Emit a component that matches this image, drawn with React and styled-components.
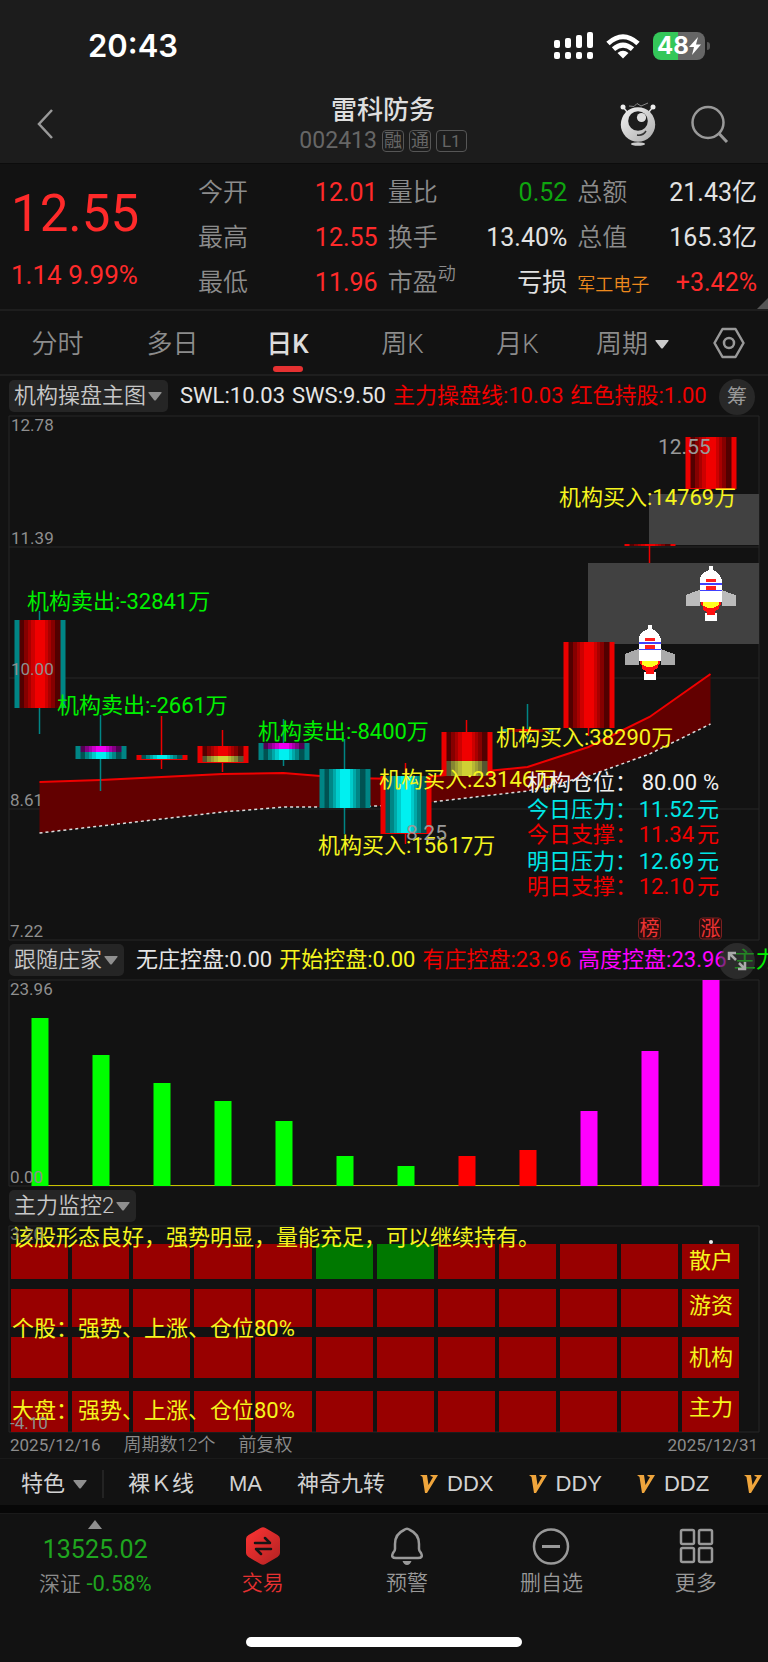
import { useState } from "react";
import styled, { createGlobalStyle } from "styled-components";

const GlobalStyle = createGlobalStyle`
  * {
    box-sizing: border-box;
  }
  body {
    margin: 0;
    background: #121212;
    font-family: Roboto, "Noto Sans CJK SC", sans-serif;
    font-weight: 350;
    line-height: 1.2;
    overflow-x: hidden;
  }
  button {
    border: 0;
    margin: 0;
    padding: 0;
    background: none;
    color: inherit;
    font: inherit;
    cursor: pointer;
  }
  svg {
    display: block;
  }
`;

const Page = styled.div`
  display: flex;
  flex-direction: column;
  color: #999;
`;

/* ---------- top ---------- */

const TopArea = styled.header`
  background: #1c1c1c;
  border-bottom: 1px solid #0c0c0c;
`;

const StatusBar = styled.div`
  display: flex;
  align-items: center;
  justify-content: space-between;
  height: 80px;
  padding: 12px 58px 0 88px;
`;

const Clock = styled.time`
  font-family: Inter, sans-serif;
  font-size: 31px;
  font-weight: 600;
  line-height: 40px;
  color: #fff;
`;

const StatusIcons = styled.div`
  display: flex;
  align-items: center;
  gap: 13px;
`;

const Battery = styled.div`
  display: flex;
  align-items: center;
  gap: 2px;
`;

const BatteryBody = styled.div`
  display: flex;
  align-items: center;
  justify-content: center;
  width: 52px;
  height: 28px;
  border-radius: 8px;
  background: linear-gradient(90deg, #34c759 48%, #666 48%);
  font-family: Inter, sans-serif;
  font-size: 24px;
  font-weight: 700;
  color: #fff;
`;

const BatteryTip = styled.div`
  width: 3px;
  height: 8px;
  border-radius: 0 4px 4px 0;
  background: #555;
`;

const NavBar = styled.div`
  display: grid;
  grid-template-columns: 1fr auto 1fr;
  align-items: center;
  height: 83px;
  padding: 4px 39px 0 37px;
`;

const TitleBlock = styled.div`
  display: flex;
  flex-direction: column;
  align-items: center;
`;

const StockName = styled.h1`
  margin: 0;
  font-size: 26px;
  font-weight: 500;
  line-height: 34px;
  color: #dedede;
`;

const StockCode = styled.div`
  display: flex;
  align-items: center;
  gap: 5px;
  font-size: 23px;
  font-weight: 400;
  line-height: 28px;
  color: #666;
`;

const Badge = styled.span`
  height: 22px;
  padding: 0 ${(props) => (props.$wide ? 5 : 1)}px;
  border: 1px solid #565656;
  border-radius: 4px;
  font-size: ${(props) => (props.$wide ? 17 : 18)}px;
  line-height: 20px;
`;

const NavActions = styled.div`
  display: flex;
  align-items: center;
  justify-content: flex-end;
  gap: 35px;
`;

/* ---------- quote ---------- */

const QuotePanel = styled.section`
  position: relative;
  display: flex;
  padding: 6px 11px 4px;
  border-bottom: 2px solid #1e1e1e;
`;

const PriceBlock = styled.div`
  width: 187px;
  padding-top: 12px;
  color: #ff2a2a;
`;

const Price = styled.div`
  font-size: 51px;
  font-weight: 400;
  line-height: 64px;
`;

const Change = styled.div`
  font-size: 26px;
  font-weight: 400;
  line-height: 58px;
`;

const StatGrid = styled.dl`
  flex: 1;
  display: grid;
  grid-template-columns: repeat(3, 1fr);
  column-gap: 10px;
  margin: 0;
`;

const Stat = styled.div`
  display: flex;
  align-items: baseline;
  justify-content: space-between;
  height: 45px;
  line-height: 45px;
  white-space: nowrap;
`;

const StatLabel = styled.dt`
  display: flex;
  font-size: ${(props) => (props.$sector ? 18 : 25)}px;
  color: ${(props) => (props.$sector ? "#ee8a1d" : "#8c8c8c")};

  sup {
    font-size: 18px;
    line-height: 28px;
  }
`;

const StatValue = styled.dd`
  margin: 0;
  font-size: 25px;
  font-weight: 400;
  color: ${(props) => props.$color || "#e2e2e2"};
`;

const Corner = styled.div`
  position: absolute;
  right: 0;
  bottom: 0;
  border-left: 11px solid transparent;
  border-bottom: 11px solid #555;
`;

/* ---------- period tabs ---------- */

const Tabs = styled.nav`
  display: flex;
  height: 65px;
  border-bottom: 2px solid #1e1e1e;
`;

const Tab = styled.button`
  position: relative;
  flex: 115;
  display: flex;
  align-items: center;
  justify-content: center;
  gap: 7px;
  padding-top: 4px;
  font-size: 26px;
  font-weight: ${(props) => (props.$active ? 500 : 350)};
  color: ${(props) => (props.$active ? "#dcdcdc" : "#8c8c8c")};

  &::after {
    content: "";
    display: ${(props) => (props.$active ? "block" : "none")};
    position: absolute;
    bottom: 2px;
    width: 30px;
    height: 6px;
    border-radius: 3px;
    background: #e53131;
  }
`;

const SettingsButton = styled.button`
  flex: 78;
  display: flex;
  align-items: center;
  justify-content: center;
`;

/* ---------- indicators ---------- */

const IndicatorBar = styled.div`
  position: relative;
  display: flex;
  align-items: center;
  gap: 12px;
  height: 40px;
  padding-left: 9px;
  overflow: hidden;
  font-size: 22px;
  font-weight: 400;
  white-space: nowrap;
`;

const Chip = styled.button`
  flex: none;
  display: flex;
  align-items: center;
  gap: 2px;
  height: 32px;
  padding: 0 6px 0 5px;
  border-radius: 5px;
  background: #252525;
  color: #c8c8c8;
  font-size: 22px;
  font-weight: 350;
`;

const Readings = styled.div`
  display: flex;
  gap: 7px;
`;

const Reading = styled.span`
  color: ${(props) => props.$color};
`;

const RoundButton = styled.button`
  position: absolute;
  right: 13px;
  top: 3px;
  display: flex;
  align-items: center;
  justify-content: center;
  width: 36px;
  height: 36px;
  border-radius: 50%;
  background: ${(props) => (props.$faint ? "rgba(60, 60, 60, 0.6)" : "#282828")};
  color: #999;
  font-size: 20px;
`;

const ChartBox = styled.div`
  padding: 0 9px;
`;

const Chart = styled.svg`
  width: 100%;
  overflow: visible;
  font-size: 22px;
  font-weight: 400;

  .axis {
    font-size: 17px;
    fill: #8f8f8f;
  }
`;

const DateRow = styled.div`
  display: flex;
  align-items: center;
  gap: 23px;
  height: 27px;
  padding: 0 10px;
  border-bottom: 1px solid #1a1a1a;
  font-size: 18px;
  color: #8c8c8c;

  time {
    font-size: 17px;
    font-weight: 400;
  }
  time:last-child {
    margin-left: auto;
  }
`;

/* ---------- bottom ---------- */

const FeatureBar = styled.div`
  display: flex;
  align-items: center;
  height: 46px;
  padding: 4px 0 0 21px;
  overflow: hidden;
  font-family: "Liberation Sans", "Noto Sans CJK SC", sans-serif;
  font-size: 22px;
  font-weight: 400;
  white-space: nowrap;
  color: #d2d2d2;
`;

const FeatureMenu = styled.button`
  display: flex;
  align-items: center;
  gap: 8px;
  height: 28px;
  padding-right: 15px;
  margin-right: 24px;
  border-right: 2px solid #232323;
`;

const FeatureList = styled.div`
  display: flex;
  gap: 35px;
`;

const Feature = styled.button`
  display: flex;
  align-items: center;
  gap: 9px;
`;

const Divider = styled.div`
  height: 9px;
  background: #070707;
  border-bottom: 1px solid #1a1a1a;
`;

const BottomNav = styled.nav`
  display: flex;
  height: 92px;
`;

const IndexLink = styled.a`
  flex: 190;
  display: flex;
  flex-direction: column;
  align-items: center;
  padding-top: 6px;
  color: #1fa51f;
  font-size: 22px;
  font-weight: 400;
  line-height: 26px;
  text-decoration: none;

  strong {
    font-size: 25px;
    font-weight: 400;
    line-height: 42px;
  }
  em {
    font-style: normal;
    font-weight: 350;
    font-size: 21px;
    color: #8c8c8c;
  }
`;

const NavItem = styled.a`
  flex: 144;
  display: flex;
  flex-direction: column;
  align-items: center;
  gap: 3px;
  padding-top: 13px;
  font-size: 21px;
  line-height: 30px;
  text-decoration: none;
  color: ${(props) => (props.$active ? "#e53131" : "#999")};
`;

const HomeArea = styled.div`
  display: flex;
  justify-content: center;
  height: 55px;
  padding-top: 31px;
`;

const HomeBar = styled.div`
  width: 36%;
  height: 10px;
  border-radius: 5px;
  background: #fff;
`;

const RED = "#f00000";
const YELLOW = "#f5f51e";
const GREEN = "#00f000";
const CYAN = "#00e6e6";
const MAGENTA = "#ff00ff";
const UP = "#ff2a2a";

const stats = [
  { label: "今开", value: "12.01", color: UP },
  { label: "量比", value: "0.52", color: "#0fa50f" },
  { label: "总额", value: "21.43亿" },
  { label: "最高", value: "12.55", color: UP },
  { label: "换手", value: "13.40%" },
  { label: "总值", value: "165.3亿" },
  { label: "最低", value: "11.96", color: UP },
  { label: "市盈", sup: "动", value: "亏损" },
  { label: "军工电子", sector: true, value: "+3.42%", color: UP },
];

const tabs = ["分时", "多日", "日K", "周K", "月K", "周期"];

const mainReadings = [
  ["SWL:10.03", "#e6e6e6"],
  ["SWS:9.50", "#e6e6e6"],
  ["主力操盘线:10.03", RED],
  ["红色持股:1.00", RED],
];

const followReadings = [
  ["无庄控盘:0.00", "#e6e6e6"],
  ["开始控盘:0.00", YELLOW],
  ["有庄控盘:23.96", RED],
  ["高度控盘:23.96", MAGENTA],
  ["主力控盘:0.00", GREEN],
];

// fills: [gradient, top, bottom]
const candles = [
  { edge: "teal", top: 204, bottom: 292, high: 195, low: 318, fills: [["red", 204, 292]] },
  { edge: "teal", top: 330, bottom: 343, high: 299, low: 375, fills: [["magenta", 330, 336], ["cyan", 336, 343]] },
  { edge: "red", top: 339, bottom: 344, high: 300, low: 353, fills: [["cyan", 339, 343]] },
  { edge: "red", top: 330, bottom: 347, high: 314, low: 356, fills: [["red", 330, 340], ["yellow", 340, 346]] },
  { edge: "teal", top: 327, bottom: 344, high: 303, low: 350, fills: [["magenta", 327, 333], ["cyan", 333, 344]] },
  { edge: "teal", top: 353, bottom: 392, high: 323, low: 418, fills: [["cyan", 353, 392]] },
  { edge: "red", top: 360, bottom: 418, high: 347, low: 428, fills: [["cyan", 360, 417]] },
  { edge: "red", top: 316, bottom: 360, high: 304, low: 360, fills: [["red", 316, 345], ["yellow", 345, 360]] },
  { edge: "teal", top: 313, bottom: 316, high: 288, low: 328, fills: [["red", 313, 316]] },
  { edge: "red", top: 226, bottom: 312, high: 226, low: 320, fills: [["red", 226, 312]] },
  { edge: "red", top: 128, bottom: 130, high: 128, low: 147, fills: [["red", 128, 130]] },
  { edge: "red", top: 21, bottom: 73, high: 21, low: 78, fills: [["red", 21, 72]] },
];

const edgeColors = { teal: "#008585", red: "#ec0000" };

const upperLine = [366, 364, 361, 358, 357, 362, 363, 357, 351, 331, 301, 258];
const lowerLine = [417, 410, 403, 396, 391, 391, 389, 382, 375, 360, 338, 308];

const flows = [
  ["机构卖出:-32841万", 18, 193, GREEN],
  ["机构卖出:-2661万", 48, 297, GREEN],
  ["机构卖出:-8400万", 249, 323, GREEN],
  ["机构买入:23146万", 370, 371, YELLOW],
  ["机构买入:15617万", 309, 437, YELLOW],
  ["机构买入:38290万", 487, 329, YELLOW],
  ["机构买入:14769万", 550, 89, YELLOW],
];

// label, value, right edge of the value, unit, baseline, color
const levels = [
  ["机构仓位：", "80.00", 688, "%", 374, "#f0f0f0"],
  ["今日压力：", "11.52", 685, "元", 401, CYAN],
  ["今日支撑：", "11.34", 685, "元", 426, RED],
  ["明日压力：", "12.69", 685, "元", 453, CYAN],
  ["明日支撑：", "12.10", 685, "元", 478, RED],
];

const bars = [
  [38, "#00ff00"],
  [75, "#00ff00"],
  [103, "#00ff00"],
  [121, "#00ff00"],
  [141, "#00ff00"],
  [176, "#00ff00"],
  [186, "#00ff00"],
  [176, "#ff0000"],
  [170, "#ff0000"],
  [131, MAGENTA],
  [71, MAGENTA],
  [0, MAGENTA],
];

// label, top, height, label baseline, green columns
const heatRows = [
  ["散户", 18, 35, 42, [5, 6]],
  ["游资", 63, 38, 87, []],
  ["机构", 111, 41, 139, []],
  ["主力", 165, 41, 189, []],
];

const columnX = (i) => 30.5 + i * 61;
const toPoints = (values) => values.map((y, i) => `${columnX(i)},${y}`).join(" ");

const Triangle = ({ color = "#8f8f8f", up }) => (
  <svg width="14" height="9" viewBox="0 0 14 9">
    <path d={up ? "M0 9 L7 0 L14 9Z" : "M1 0H13Q14 0 13.5 1L8 8Q7 9 6 8L.5 1Q0 0 1 0Z"} fill={color} />
  </svg>
);

const shades = {
  red: ["#520000", "#850000", "#a80000", "#cc0000", "#f00000"],
  cyan: ["#005252", "#008585", "#00a8a8", "#00cccc", "#00f0f0"],
  magenta: ["#520052", "#850085", "#a800a8", "#cc00cc", "#f000f0"],
  yellow: ["#555530", "#858532", "#a0a034", "#b8b834", "#d0d034"],
};

const Gradients = () => (
  <defs>
    {Object.entries(shades).map(([name, colors]) => {
      const row = [...colors, ...colors.slice(0, 4).reverse()];
      const edges = [0, 12, 21, 29, 38, 62, 70, 78, 87, 100];
      return (
        <linearGradient id={`shade-${name}`} key={name}>
          {row.map((color, i) => [
            <stop key={`${i}a`} offset={`${edges[i]}%`} stopColor={color} />,
            <stop key={`${i}b`} offset={`${edges[i + 1]}%`} stopColor={color} />,
          ])}
        </linearGradient>
      );
    })}
  </defs>
);

function Candle({ x, candle }) {
  const color = edgeColors[candle.edge];
  return (
    <g>
      <path d={`M${x} ${candle.high}V${candle.low}`} stroke={color} strokeWidth="1.5" />
      <rect x={x - 25} y={candle.top} width="51" height={candle.bottom - candle.top} fill={color} />
      {candle.fills.map(([name, top, bottom]) => (
        <rect
          key={name}
          x={x - 20}
          y={top}
          width="41"
          height={bottom - top}
          fill={`url(#shade-${name})`}
        />
      ))}
    </g>
  );
}

const Rocket = ({ x, y, wing }) => (
  <g transform={`translate(${x} ${y})`} shapeRendering="crispEdges">
    <path d="M-25 29L-11 24V40H-25ZM25 29L11 24V40H25Z" fill={wing} />
    <path d="M-2 0H2V4L6 6L9 9L11 13V36H-11V13L-9 9L-6 6L-2 4Z" fill="#fff" />
    <path d="M-6 47H6V55H-6Z" fill="#fff" />
    <path d="M-5 13H5V16H-5ZM-5 20H5V24H-5Z" fill="#ff2020" />
    <path d="M-11 17H11V19H-11ZM-11 24H11V25H-11Z" fill="#4040ff" />
    <path d="M-10 36H10V39L8 40V43L4 46V49H-4V46L-8 43V40L-10 39Z" fill="#ff1010" />
    <path d="M-8 36H8V39L3 42H-3L-8 39Z" fill="#ffff20" />
  </g>
);

function MainChart() {
  return (
    <Chart viewBox="0 0 750 524" role="img" aria-label="日K">
      <Gradients />
      <path d="M0 0H750V524H0ZM0 131H750M0 262H750M0 393H750" fill="none" stroke="#272727" />
      <rect x="640" y="78" width="110" height="51" fill="#414141" />
      <rect x="579" y="147" width="171" height="81" fill="#414141" />
      <polygon
        points={`${toPoints(upperLine)} ${lowerLine.map((y, i) => `${columnX(i)},${y}`).reverse().join(" ")}`}
        fill="#620000"
      />
      <polyline points={toPoints(upperLine)} fill="none" stroke="#f00000" strokeWidth="2" />
      <polyline points={toPoints(lowerLine)} fill="none" stroke="#ddd" strokeWidth="1.5" strokeDasharray="3 3" />
      {candles.map((candle, i) => (
        <Candle key={i} x={columnX(i)} candle={candle} />
      ))}
      <Rocket x={columnX(10)} y={209} wing="#aaa" />
      <Rocket x={columnX(11)} y={150} wing="#bbb" />
      <text className="axis" x="2" y="15">12.78</text>
      <text className="axis" x="2" y="128">11.39</text>
      <text className="axis" x="2" y="259">10.00</text>
      <text className="axis" x="1" y="390">8.61</text>
      <text className="axis" x="1" y="521">7.22</text>
      {flows.map(([text, x, y, color]) => (
        <text key={text} x={x} y={y} fill={color}>{text}</text>
      ))}
      <text x="649" y="38" fontSize="21" fill="#999">12.55</text>
      <text x="397" y="424" fontSize="21" fill="#999">8.25</text>
      {levels.map(([label, value, right, unit, y, color]) => (
        <g key={label} fill={color}>
          <text x="518" y={y}>{label}</text>
          <text x={right} y={y} textAnchor="end">{value}</text>
          <text x="710" y={y} textAnchor="end">{unit}</text>
        </g>
      ))}
      {["榜", "涨"].map((text, i) => (
        <g key={text}>
          <rect x={columnX(10 + i) - 11} y="502" width="22" height="21" rx="3" fill="#260d0d" stroke="#7a2020" />
          <text x={columnX(10 + i)} y="520" fontSize="20" textAnchor="middle" fill="#ee3333">{text}</text>
        </g>
      ))}
    </Chart>
  );
}

function FollowChart() {
  return (
    <Chart viewBox="0 0 750 206" role="img" aria-label="跟随庄家">
      <path d="M0 0H750V206H0Z" fill="none" stroke="#272727" />
      <path d="M30 205.5H700" stroke="#c8c000" />
      {bars.map(([top, color], i) => (
        <rect key={i} x={columnX(i) - 8} y={top} width="17" height={206 - top} fill={color} />
      ))}
      <text className="axis" x="1" y="15">23.96</text>
      <text className="axis" x="1" y="203">0.00</text>
    </Chart>
  );
}

function MonitorChart() {
  return (
    <Chart viewBox="0 0 750 206" role="img" aria-label="主力监控2">
      <path d="M0 0H750V206H0Z" fill="none" stroke="#272727" />
      {heatRows.map(([label, top, height, baseline, green]) => (
        <g key={label}>
          {candles.map((_, i) => (
            <rect
              key={i}
              x={2 + i * 61}
              y={top}
              width="57"
              height={height}
              fill={green.includes(i) ? "#007800" : "#980000"}
            />
          ))}
          <text x="702" y={baseline} textAnchor="middle" fill={YELLOW}>{label}</text>
        </g>
      ))}
      <circle cx="702" cy="16" r="2" fill="#eee" />
      <g fill={YELLOW}>
        <text x="3" y="19">该股形态良好，强势明显，量能充足，可以继续持有。</text>
        <text x="3" y="110">个股：强势、上涨、仓位80%</text>
        <text x="3" y="192">大盘：强势、上涨、仓位80%</text>
      </g>
      <text className="axis" x="1" y="14" opacity="0.7">3.20</text>
      <text className="axis" x="1" y="203">-4.10</text>
    </Chart>
  );
}

const SignalIcon = () => (
  <svg width="39" height="28" viewBox="0 0 39 28" fill="#fff">
    {[8, 6, 3, 0].map((y, i) => (
      <g key={y}>
        <rect x={i * 11} y={y} width="6" height={16 - y} rx="2" />
        <rect x={i * 11} y="20" width="6" height="7" rx="2" />
      </g>
    ))}
  </svg>
);

const WifiIcon = () => (
  <svg width="34" height="25" viewBox="0 0 34 25">
    <g fill="none" stroke="#fff" strokeWidth="5">
      <path d="M2 9.5Q17 -4 32 9.5" />
      <path d="M7.5 15.2Q17 7 26.5 15.2" />
    </g>
    <path d="M11.5 19Q17 14.5 22.5 19L17 24.5Z" fill="#fff" />
  </svg>
);

const RobotIcon = () => (
  <svg width="36" height="44" viewBox="0 0 36 44">
    <defs>
      <linearGradient id="robot" x1="0" y1="0" x2="1" y2="1">
        <stop offset="0" stopColor="#f4f4f4" />
        <stop offset="1" stopColor="#aaa" />
      </linearGradient>
    </defs>
    <path d="M3 5L8 11M33 5L28 11" stroke="#ddd" strokeWidth="1.5" />
    <circle cx="3" cy="5" r="2.5" fill="#eee" />
    <circle cx="33" cy="5" r="2.5" fill="#eee" />
    <path d="M9 4L14 4.5L17 1.5L21 4L28 1" fill="none" stroke="#888" />
    <circle cx="18" cy="22.5" r="17.2" fill="url(#robot)" />
    <circle cx="18" cy="19" r="9.8" fill="#1c1c1c" />
    <circle cx="21.5" cy="15.5" r="4.6" fill="#ddd" />
    <path d="M17 33Q23 34 26 29" fill="none" stroke="#333" strokeWidth="1.5" />
    <ellipse cx="18" cy="42" rx="7" ry="1.8" fill="#ccc" />
  </svg>
);

const VIcon = () => (
  <svg width="18" height="18" viewBox="0 0 18 18">
    <path d="M0 0H7L8.5 10L13 2L10.5 1V0H18L7 18H5L2.5 2Z" fill="#efa53c" />
  </svg>
);

const TradeIcon = () => (
  <svg width="36" height="38" viewBox="0 0 36 38">
    <defs>
      <linearGradient id="trade" x1="0" y1="0" x2="1" y2="1">
        <stop offset="0.2" stopColor="#f03030" />
        <stop offset="1" stopColor="#b02222" />
      </linearGradient>
    </defs>
    <path
      d="M15.5 1Q18 -.5 20.5 1L32.5 8Q35 9.5 35 12V26Q35 28.5 32.5 30L20.5 37Q18 38.5 15.5 37L3.5 30Q1 28.5 1 26V12Q1 9.5 3.5 8Z"
      fill="url(#trade)"
    />
    <path d="M10 16H25L20 11M26 22H11L16 27" fill="none" stroke="#151515" strokeWidth="2.5" strokeLinecap="round" strokeLinejoin="round" />
  </svg>
);

const BellIcon = () => (
  <svg width="36" height="38" viewBox="0 0 36 38">
    <path
      d="M15 3Q18 .5 21 3Q30 7 30 17V22Q30 24 32 26Q34.5 31 29 31H7Q1.5 31 4 26Q6 24 6 22V17Q6 7 15 3Z"
      fill="none"
      stroke="#999"
      strokeWidth="2.5"
    />
    <path d="M13.5 34H22.5Q21 38 18 38Q15 38 13.5 34Z" fill="#999" />
  </svg>
);

const RemoveIcon = () => (
  <svg width="38" height="38" viewBox="0 0 38 38" fill="none" stroke="#999">
    <circle cx="19" cy="19.5" r="17" strokeWidth="2.5" />
    <path d="M10 19.5H28" strokeWidth="3" />
  </svg>
);

const MoreIcon = () => (
  <svg width="36" height="38" viewBox="0 0 36 38" fill="none" stroke="#999" strokeWidth="2.5">
    {[[3, 3], [21, 3], [3, 21], [21, 21]].map(([x, y]) => (
      <rect key={`${x}-${y}`} x={x} y={y} width="13" height="14" rx="1.5" />
    ))}
  </svg>
);

function Indicator({ name, readings = [], children }) {
  return (
    <IndicatorBar>
      <Chip type="button" aria-haspopup="listbox">
        {name}
        <Triangle />
      </Chip>
      <Readings>
        {readings.map(([text, color]) => (
          <Reading key={text} $color={color}>{text}</Reading>
        ))}
      </Readings>
      {children}
    </IndicatorBar>
  );
}

function App() {
  const [period, setPeriod] = useState("日K");

  return (
    <Page>
      <GlobalStyle />
      <TopArea>
        <StatusBar>
          <Clock>20:43</Clock>
          <StatusIcons>
            <SignalIcon />
            <WifiIcon />
            <Battery>
              <BatteryBody>
                48
                <svg width="12" height="18" viewBox="0 0 12 18">
                  <path d="M9 0L0 10H5L3 18L12 7.5H7Z" fill="#fff" />
                </svg>
              </BatteryBody>
              <BatteryTip />
            </Battery>
          </StatusIcons>
        </StatusBar>
        <NavBar>
          <button type="button" aria-label="返回">
            <svg width="18" height="30" viewBox="0 0 18 30" fill="none" stroke="#999" strokeWidth="2.5">
              <path d="M15 1L2 15L15 29" />
            </svg>
          </button>
          <TitleBlock>
            <StockName>雷科防务</StockName>
            <StockCode>
              002413
              <Badge>融</Badge>
              <Badge>通</Badge>
              <Badge $wide>L1</Badge>
            </StockCode>
          </TitleBlock>
          <NavActions>
            <button type="button" aria-label="助手">
              <RobotIcon />
            </button>
            <button type="button" aria-label="搜索">
              <svg width="38" height="38" viewBox="0 0 38 38" fill="none" stroke="#999" strokeWidth="2.5">
                <circle cx="17" cy="17.5" r="15.5" />
                <path d="M27.5 28L36 37" strokeWidth="3" />
              </svg>
            </button>
          </NavActions>
        </NavBar>
      </TopArea>

      <QuotePanel>
        <PriceBlock>
          <Price>12.55</Price>
          <Change>1.14 9.99%</Change>
        </PriceBlock>
        <StatGrid>
          {stats.map((stat) => (
            <Stat key={stat.label}>
              <StatLabel $sector={stat.sector}>
                {stat.label}
                {stat.sup && <sup>{stat.sup}</sup>}
              </StatLabel>
              <StatValue $color={stat.color}>{stat.value}</StatValue>
            </Stat>
          ))}
        </StatGrid>
        <Corner />
      </QuotePanel>

      <Tabs>
        {tabs.map((tab) => (
          <Tab key={tab} type="button" $active={tab === period} onClick={() => setPeriod(tab)}>
            {tab}
            {tab === "周期" && <Triangle color="#ccc" />}
          </Tab>
        ))}
        <SettingsButton type="button" aria-label="设置">
          <svg width="32" height="32" viewBox="0 0 32 32" fill="none" stroke="#999" strokeWidth="2.5">
            <path d="M9.5 2H22.5L30.5 16L22.5 30H9.5L1.5 16Z" strokeLinejoin="round" />
            <circle cx="16" cy="16" r="5" />
          </svg>
        </SettingsButton>
      </Tabs>

      <Indicator name="机构操盘主图" readings={mainReadings}>
        <RoundButton type="button">筹</RoundButton>
      </Indicator>
      <ChartBox>
        <MainChart />
      </ChartBox>

      <Indicator name="跟随庄家" readings={followReadings}>
        <RoundButton type="button" $faint aria-label="展开">
          <svg width="20" height="20" viewBox="0 0 20 20" fill="none" stroke="#aaa" strokeWidth="2.5">
            <path d="M2 9V2H9M2 2L9 9M18 11V18H11M18 18L12 12" />
          </svg>
        </RoundButton>
      </Indicator>
      <ChartBox>
        <FollowChart />
      </ChartBox>

      <Indicator name="主力监控2" />
      <ChartBox>
        <MonitorChart />
      </ChartBox>

      <DateRow>
        <time>2025/12/16</time>
        <span>周期数12个</span>
        <span>前复权</span>
        <time>2025/12/31</time>
      </DateRow>

      <FeatureBar>
        <FeatureMenu type="button">
          特色
          <Triangle />
        </FeatureMenu>
        <FeatureList>
          <Feature type="button">裸Ｋ线</Feature>
          <Feature type="button">MA</Feature>
          <Feature type="button">神奇九转</Feature>
          {["DDX", "DDY", "DDZ", "DDE"].map((name) => (
            <Feature key={name} type="button">
              <VIcon />
              {name}
            </Feature>
          ))}
        </FeatureList>
      </FeatureBar>
      <Divider />

      <BottomNav>
        <IndexLink href="#index">
          <Triangle up />
          <strong>13525.02</strong>
          <span>
            <em>深证</em> -0.58%
          </span>
        </IndexLink>
        <NavItem href="#trade" $active>
          <TradeIcon />
          交易
        </NavItem>
        <NavItem href="#alert">
          <BellIcon />
          预警
        </NavItem>
        <NavItem href="#remove">
          <RemoveIcon />
          删自选
        </NavItem>
        <NavItem href="#more">
          <MoreIcon />
          更多
        </NavItem>
      </BottomNav>
      <HomeArea>
        <HomeBar />
      </HomeArea>
    </Page>
  );
}

export default App;
